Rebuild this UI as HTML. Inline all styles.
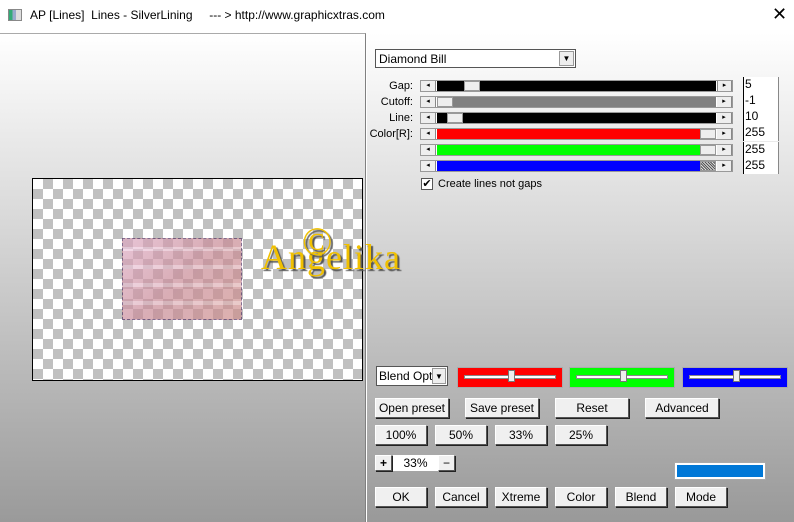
<!DOCTYPE html><html><head><style>
*{margin:0;padding:0;box-sizing:border-box}
body{width:794px;height:522px;overflow:hidden;font-family:"Liberation Sans",sans-serif;font-size:12px;background:#fff;position:relative}
.a{position:absolute}
.title{left:0;top:0;width:794px;height:33px;background:#fff}
.left{left:0;top:33px;width:366px;height:489px;background:linear-gradient(#fff,#9a9a9a);border-right:1px solid #808080;border-top:1px solid #aaa}
.right{left:367px;top:33px;width:427px;height:489px;background:linear-gradient(#fff 0%,#d8d8d8 40%,#999 100%)}
.chk{left:32px;top:178px;width:331px;height:203px;border:1px solid #000;background-color:#fff;background-image:linear-gradient(45deg,#c0c0c0 25%,transparent 25%,transparent 75%,#c0c0c0 75%),linear-gradient(45deg,#c0c0c0 25%,transparent 25%,transparent 75%,#c0c0c0 75%);background-size:20px 20px;background-position:0 0,10px 10px}
.pic{left:122px;top:238px;width:120px;height:82px;border:1px dashed #503060;background:repeating-linear-gradient(0deg,rgba(180,100,120,.35) 0 14px,rgba(235,200,215,.4) 14px 18px),linear-gradient(135deg,#f4d0ec,#d4a0a8,#dca898);opacity:.7}
.sb{height:12px;left:420px;width:313px;background:#fff;border:1px solid #999}
.sb .btn{position:absolute;top:0;width:15px;height:10px;background:#eee;border-right:1px solid #888;font-size:7px;line-height:10px;text-align:center}
.sb .tr{position:absolute;top:0;left:16px;right:16px;height:10px}
.sb .th{position:absolute;top:0;height:10px;background:#eee;border:1px solid #999}
.lbl{font-size:11px;text-align:right;width:60px;left:353px}
.vb{left:743px;width:36px;height:16px;background:#fff;border-left:1px solid #000;border-right:1px solid #888;font-size:12px;padding-left:1px;line-height:15px}
.bt{height:20px;background:#f0f0f0;border:1px solid #fff;border-right-color:#555;border-bottom-color:#555;box-shadow:1px 1px 0 #222;text-align:center;line-height:18px;font-size:12px}
.cs{top:367px;height:21px;border:1px solid #aaa}
.cs .l{position:absolute;left:6px;right:6px;top:7px;height:4px;background:#fff;border:1px solid #888}
.cs .k{position:absolute;top:2px;width:7px;height:12px;background:#eee;border:1px solid #777}
</style></head><body>
<div class="a title"></div>
<div class="a" style="left:8px;top:9px;width:14px;height:12px;border:1px solid #888;background:linear-gradient(90deg,#3a7 0 30%,#9ac 30% 60%,#ddd 60%)"></div>
<div class="a" style="left:30px;top:8px;font-size:12px">AP [Lines]&nbsp; Lines - SilverLining &nbsp; &nbsp; --- &gt; http://www.graphicxtras.com</div>
<div class="a" style="left:772px;top:4px;font-size:18px;font-weight:300">✕</div>
<div class="a left"></div>
<div class="a right"></div>
<div class="a chk"></div>
<div class="a pic"></div>
<div class="a" style="left:261px;top:236px;font-family:'Liberation Serif',serif;font-size:36px;color:#f0c000;text-shadow:2px 2px 1px #555;letter-spacing:1px">Angelika</div>
<div class="a" style="left:302px;top:218px;font-family:'Liberation Serif',serif;font-size:40px;color:#f0c000;text-shadow:2px 2px 1px #555">©</div>

<div class="a" style="left:375px;top:49px;width:201px;height:19px;background:#fff;border:1px solid #555;font-size:12px;padding:2px 3px">Diamond Bill<div style="position:absolute;right:1px;top:1px;width:15px;height:15px;background:#eee;border:1px solid #999;font-size:8px;text-align:center;line-height:14px">▼</div></div>

<div class="a lbl" style="top:80px">Gap:</div>
<div class="a lbl" style="top:96px">Cutoff:</div>
<div class="a lbl" style="top:112px">Line:</div>
<div class="a lbl" style="top:128px">Color[R]:</div>

<div class="a sb" style="top:80px"><div class="btn" style="left:0">◂</div><div class="tr" style="background:#000"></div><div class="th" style="left:43px;width:16px"></div><div class="btn" style="right:0;border-left:1px solid #888">▸</div></div>
<div class="a sb" style="top:96px"><div class="btn" style="left:0">◂</div><div class="tr" style="background:#808080"></div><div class="th" style="left:16px;width:16px"></div><div class="btn" style="right:0">▸</div></div>
<div class="a sb" style="top:112px"><div class="btn" style="left:0">◂</div><div class="tr" style="background:#000"></div><div class="th" style="left:26px;width:16px"></div><div class="btn" style="right:0">▸</div></div>
<div class="a sb" style="top:128px"><div class="btn" style="left:0">◂</div><div class="tr" style="background:#f00;right:32px"></div><div class="th" style="right:16px;width:16px"></div><div class="btn" style="right:0">▸</div></div>
<div class="a sb" style="top:144px"><div class="btn" style="left:0">◂</div><div class="tr" style="background:#0f0;right:32px"></div><div class="th" style="right:16px;width:16px"></div><div class="btn" style="right:0">▸</div></div>
<div class="a sb" style="top:160px"><div class="btn" style="left:0">◂</div><div class="tr" style="background:#00f;right:32px"></div><div class="th" style="right:16px;width:16px;background:repeating-linear-gradient(45deg,#555 0 1px,#ddd 1px 2px)"></div><div class="btn" style="right:0">▸</div></div>

<div class="a vb" style="top:77px">5</div>
<div class="a vb" style="top:93px">-1</div>
<div class="a vb" style="top:109px">10</div>
<div class="a vb" style="top:125px">255</div>
<div class="a vb" style="top:142px">255</div>
<div class="a vb" style="top:158px">255</div>

<div class="a" style="left:421px;top:178px;width:12px;height:12px;background:#fff;border:1px solid #555;font-size:11px;line-height:10px;text-align:center">✔</div>
<div class="a" style="left:438px;top:178px;font-size:11px">Create lines not gaps</div>

<div class="a" style="left:376px;top:366px;width:72px;height:20px;background:#fff;border:1px solid #555;font-size:12px;padding:2px 2px;overflow:hidden;white-space:nowrap">Blend Opti<div style="position:absolute;right:1px;top:1px;width:14px;height:16px;background:#eee;border:1px solid #999;font-size:8px;text-align:center;line-height:15px">▼</div></div>
<div class="a cs" style="left:457px;width:106px;background:#f00"><div class="l"></div><div class="k" style="left:50px"></div></div>
<div class="a cs" style="left:569px;width:106px;background:#0f0"><div class="l"></div><div class="k" style="left:50px"></div></div>
<div class="a cs" style="left:682px;width:106px;background:#00f"><div class="l"></div><div class="k" style="left:50px"></div></div>

<div class="a bt" style="left:375px;top:398px;width:74px">Open preset</div>
<div class="a bt" style="left:465px;top:398px;width:74px">Save preset</div>
<div class="a bt" style="left:555px;top:398px;width:74px">Reset</div>
<div class="a bt" style="left:645px;top:398px;width:74px">Advanced</div>

<div class="a bt" style="left:375px;top:425px;width:52px">100%</div>
<div class="a bt" style="left:435px;top:425px;width:52px">50%</div>
<div class="a bt" style="left:495px;top:425px;width:52px">33%</div>
<div class="a bt" style="left:555px;top:425px;width:52px">25%</div>

<div class="a bt" style="left:375px;top:455px;width:17px;height:16px;line-height:14px;font-weight:bold">+</div>
<div class="a" style="left:393px;top:455px;width:45px;height:16px;background:#fff;text-align:center;font-size:12px;line-height:16px">33%</div>
<div class="a bt" style="left:438px;top:455px;width:17px;height:16px;line-height:14px">−</div>

<div class="a" style="left:675px;top:463px;width:90px;height:16px;background:#0078d7;border:2px solid #fff;outline:1px solid #aaa"></div>

<div class="a bt" style="left:375px;top:487px;width:52px">OK</div>
<div class="a bt" style="left:435px;top:487px;width:52px">Cancel</div>
<div class="a bt" style="left:495px;top:487px;width:52px">Xtreme</div>
<div class="a bt" style="left:555px;top:487px;width:52px">Color</div>
<div class="a bt" style="left:615px;top:487px;width:52px">Blend</div>
<div class="a bt" style="left:675px;top:487px;width:52px">Mode</div>
</body></html>
